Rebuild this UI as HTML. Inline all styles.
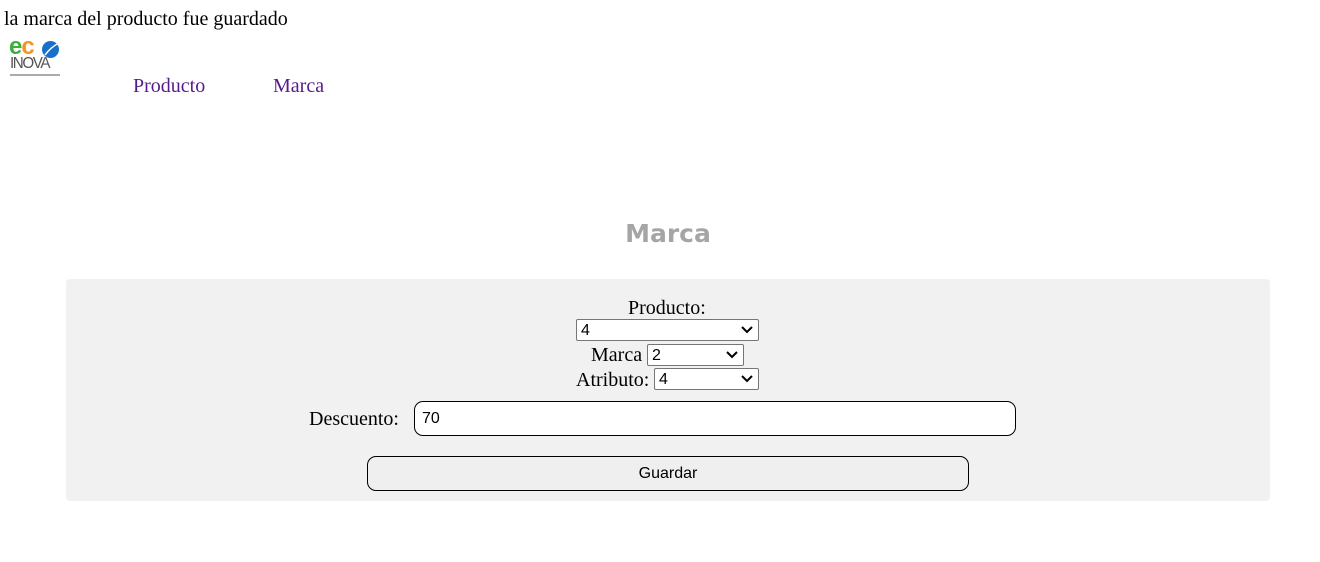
<!DOCTYPE html>
<html><head><meta charset="utf-8"><style>
body{margin:0;width:1320px;height:562px;background:#fff;font-family:"Liberation Serif",serif;font-size:20px;color:#000;position:relative;overflow:hidden}
.a{position:absolute;white-space:nowrap}
.sel{position:absolute;height:22px;border:1px solid #767676;border-radius:2px;background:#fff;box-sizing:border-box;font-family:"Liberation Sans",sans-serif;font-size:16px;line-height:20px;padding-left:4px;padding-top:1px}
.sel svg{position:absolute;right:5px;top:6px}
</style></head><body>
<div class="a" style="left:4px;top:8px">la marca del producto fue guardado</div>
<div class="a" style="left:9px;top:38px;width:54px;height:42px">
 <div style="position:absolute;left:0;top:-5px;font-family:'Liberation Sans',sans-serif;font-weight:bold;font-size:24px;letter-spacing:-1px"><span style="color:#3bb03b">e</span><span style="color:#f7941d">c</span></div>
 <div style="position:absolute;left:33px;top:3px;width:17px;height:17px;border-radius:50%;background:#1a6fc9"></div>
 <svg style="position:absolute;left:33px;top:3px" width="18" height="18"><path d="M3 14 Q9 6 17 2" stroke="#fff" stroke-width="1.5" fill="none"/></svg>
 <div style="position:absolute;left:1px;top:17px;font-family:'Liberation Sans',sans-serif;font-size:16px;color:#555;letter-spacing:-1.5px;transform:scaleX(0.95);transform-origin:left">INOVA</div>
 <div style="position:absolute;left:1px;top:36px;width:50px;height:2px;background:#aaa"></div>
</div>
<div class="a" style="left:133px;top:75px;color:#551a8b">Producto</div>
<div class="a" style="left:273px;top:75px;color:#551a8b">Marca</div>
<div class="a" style="left:0;width:1336px;text-align:center;top:219px;font-family:'DejaVu Sans',sans-serif;font-weight:bold;font-size:25px;color:#a5a5a5">Marca</div>
<div style="position:absolute;left:66px;top:279px;width:1204px;height:222px;background:#f1f1f1;border-radius:4px"></div>
<div class="a" style="left:628px;top:297px">Producto:</div>
<div class="sel" style="left:576px;top:319px;width:183px">4<svg width="12" height="8"><path d="M1 1l5 5 5-5" stroke="#000" stroke-width="2" fill="none"/></svg></div>
<div class="a" style="left:591px;top:344px">Marca</div>
<div class="sel" style="left:647px;top:344px;width:97px">2<svg width="12" height="8"><path d="M1 1l5 5 5-5" stroke="#000" stroke-width="2" fill="none"/></svg></div>
<div class="a" style="left:576px;top:369px">Atributo:</div>
<div class="sel" style="left:654px;top:368px;width:105px">4<svg width="12" height="8"><path d="M1 1l5 5 5-5" stroke="#000" stroke-width="2" fill="none"/></svg></div>
<div class="a" style="left:309px;top:408px">Descuento:</div>
<div style="position:absolute;left:414px;top:401px;width:602px;height:35px;box-sizing:border-box;border:1px solid #000;border-radius:9px;background:#fff;font-family:'Liberation Sans',sans-serif;font-size:16px;line-height:33px;padding-left:7px">70</div>
<div style="position:absolute;left:367px;top:456px;width:602px;height:35px;box-sizing:border-box;border:1px solid #000;border-radius:9px;background:#efefef;font-family:'Liberation Sans',sans-serif;font-size:16px;line-height:33px;text-align:center">Guardar</div>
</body></html>
